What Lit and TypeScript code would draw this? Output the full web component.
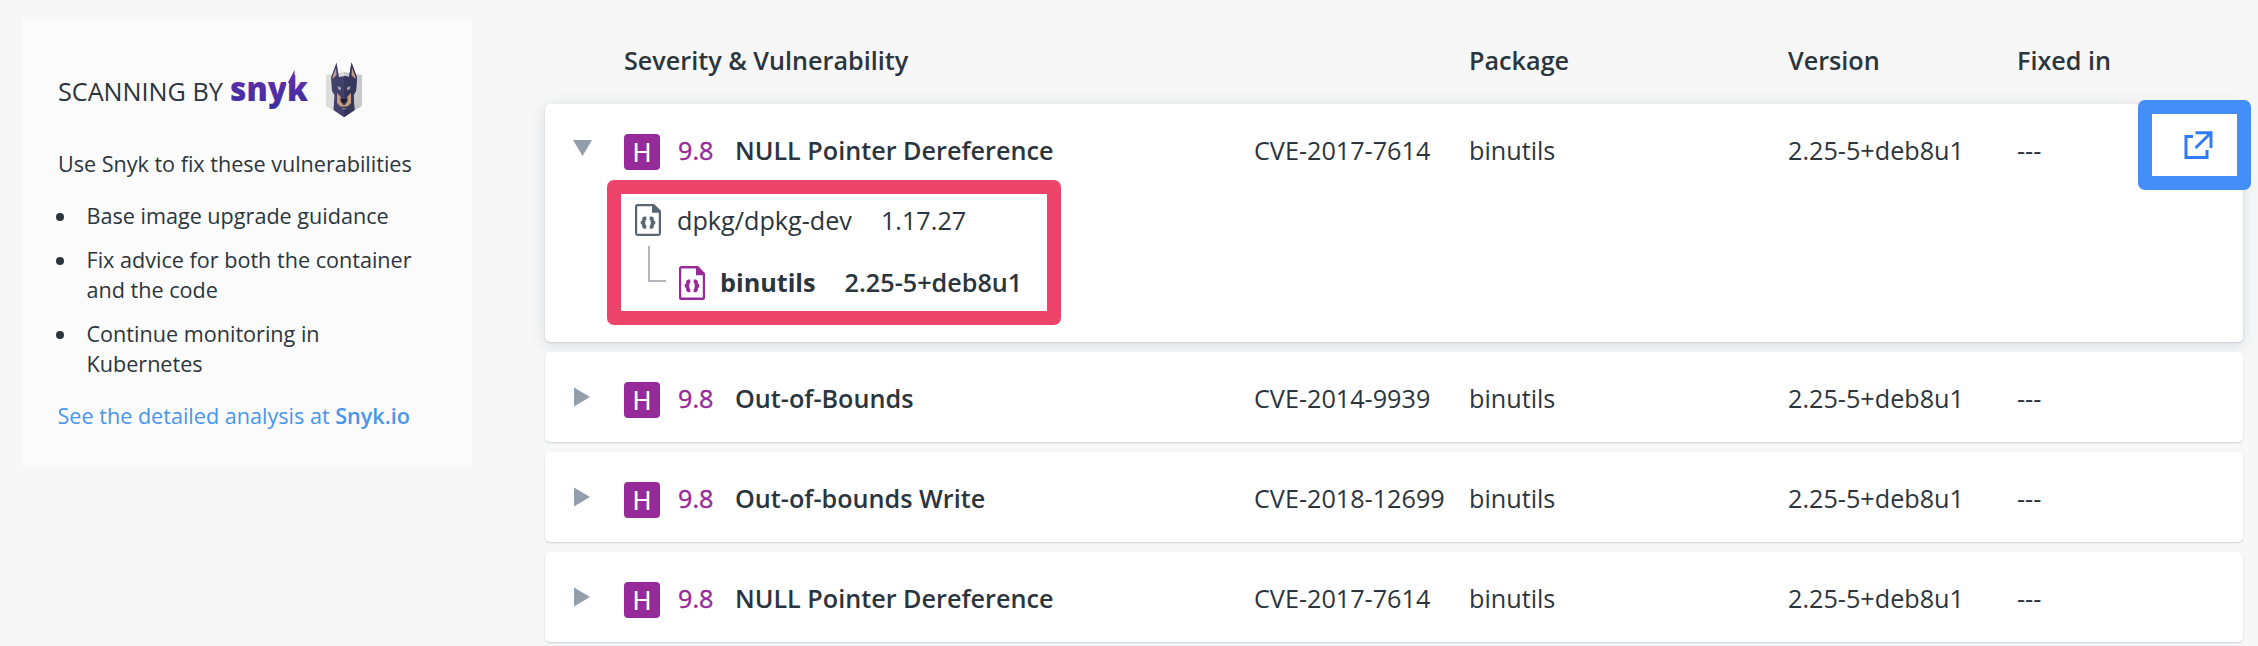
import { LitElement, html, svg, css, nothing } from "lit";
import { customElement, property } from "lit/decorators.js";

interface Vuln {
  name: string;
  cve: string;
  open?: boolean;
}

const VULNS: Vuln[] = [
  { name: "NULL Pointer Dereference", cve: "CVE-2017-7614", open: true },
  { name: "Out-of-Bounds", cve: "CVE-2014-9939" },
  { name: "Out-of-bounds Write", cve: "CVE-2018-12699" },
  { name: "NULL Pointer Dereference", cve: "CVE-2017-7614" },
];

// Document outline with a folded corner and a pair of braces inside.
const fileIcon = (h: number) => html`
  <svg class="file" width="26" height=${h} viewBox="0 0 26 33" preserveAspectRatio="none">
    <path d="M2.5 0H19L26 7V30.5Q26 33 23.5 33H2.5Q0 33 0 30.5V2.5Q0 0 2.500 0ZM2.200 2.400V30.600H23.800V9H17V2.400Z" fill="currentColor" fill-rule="evenodd"/>
    <path d="M11.300 14.700H9.800Q8.800 14.700 8.800 16V17.600Q8.800 19.200 5.800 19.200Q8.800 19.200 8.800 20.800V22.400Q8.800 23.700 9.800 23.700H11.300M14.700 14.700H16.200Q17.200 14.700 17.200 16V17.600Q17.200 19.200 20.200 19.200Q17.200 19.200 17.200 20.800V22.400Q17.200 23.700 16.200 23.700H14.700" fill="none" stroke="currentColor" stroke-width="3.4"/>
  </svg>`;

@customElement("snyk-panel")
class SnykPanel extends LitElement {
  static styles = css`
    :host { display: block; box-sizing: border-box; width: 450px; height: 448px; background: #fbfbfb; padding: 42px 36px 0; color: #2b353d; font-size: 21.6px; line-height: 30px; }
    .title { display: flex; height: 60px; align-items: flex-start; font-size: 25.2px; line-height: 62px; white-space: nowrap; }
    .word { margin-left: 7px; display: block; overflow: visible; }
    .dog { margin-left: 17px; display: block; }
    .logo-text { font: 800 34px "Open Sans", sans-serif; }
    p { margin: 0; white-space: nowrap; }
    .intro { margin-top: 29px; letter-spacing: -0.02px; }
    ul { list-style: none; margin: 22px 0 22px; padding: 0; display: grid; gap: 14px; }
    li { display: grid; grid-template-columns: 28.5px 1fr; }
    .dot { width: 8px; height: 8px; border-radius: 50%; background: #2b353d; margin: 12px 0 0 -2px; }
    .link { color: #4896ec; margin-left: -0.5px; }
    b { font-weight: 600; }
  `;
  render() {
    return html`
      <div class="title">
        <span>SCANNING BY</span>
        <svg class="word" width="79" height="60" viewBox="0 0 79 60">
          <defs>
            <linearGradient id="ink" gradientUnits="userSpaceOnUse" x1="0" y1="10" x2="0" y2="50">
              <stop offset="0" stop-color="#6a2ea8"/><stop offset="1" stop-color="#3730a0"/>
            </linearGradient>
          </defs>
          <text class="logo-text" fill="url(#ink)" x="0" y="41" textLength="78" lengthAdjust="spacingAndGlyphs">snyk</text>
          <path d="M56 12H64.500L57.300 24H56Z" fill="#fbfbfb"/>
          <path d="M57.800 23L64.600 10V23Z" fill="url(#ink)"/>
        </svg>
        <svg class="dog" width="36" height="58" viewBox="0 0 36 58">
          <path d="M0 15L18 12V57L0 46Z" fill="#dcdcdd"/>
          <path d="M18 12L36 15V46L18 57Z" fill="#c9c9ca"/>
          <path d="M10.500 2.500L13 17Q18 15.500 23 17L25.500 2.500L31 17.500L30 31L27.500 35L28.500 50L18 57.300L7.500 50L8.500 35L6 31L5 17.500Z" fill="#41406a"/>
          <path d="M18 16Q20.500 16 23 17L25.500 2.500L31 17.500L30 31L27.500 35L28.500 50L18 57.300Z" fill="#37365d"/>
          <path d="M10 8L10.500 15L6.500 19V17ZM26 8L25.500 15L29.500 19V17Z" fill="#c8a089"/>
          <path d="M11 33L14.500 36.500V41L17 45H19L21.500 41V36.500L25 33V43L21.500 46.500H14.500L11 43Z" fill="#c99d7c"/>
          <path d="M11.500 26L15 27.500V30L12.500 29.500ZM24.500 26L21 27.500V30L23.500 29.500Z" fill="#a9a3ae"/>
          <path d="M14.500 39H21.500L20 43H16Z" fill="#211f36"/>
          <path d="M15 48H21L18 49.500Z" fill="#8d8896"/>
        </svg>
      </div>
      <p class="intro">Use Snyk to fix these vulnerabilities</p>
      <ul>
        <li><span class="dot"></span><span>Base image upgrade guidance</span></li>
        <li><span class="dot"></span><span>Fix advice for both the container<br>and the code</span></li>
        <li><span class="dot"></span><span>Continue monitoring in<br>Kubernetes</span></li>
      </ul>
      <p class="link">See the detailed analysis at <b>Snyk.io</b></p>
    `;
  }
}

@customElement("vuln-row")
class VulnRow extends LitElement {
  @property({ attribute: false }) vuln!: Vuln;
  static styles = css`
    :host { display: block; }
    .card { position: relative; box-sizing: border-box; height: 90px; background: #fff; border-radius: 5px; box-shadow: 0 1px 2px #c9ced8; }
    .card.open { height: 238px; box-shadow: 0 1px 2px #c9ced8, 0 3px 16px rgba(70, 90, 120, 0.17); }
    .line { display: grid; grid-template-columns: 79px 54px 57px 519px 215px 319px 229px 1fr; padding-top: 29px; align-items: start; line-height: 34px; white-space: nowrap; }
    .arrow { display: block; margin-left: 28px; margin-top: 6px; color: #929eab; }
    .badge { width: 36px; height: 36px; margin-top: 1px; border-radius: 4px; background: #972a99; color: #fff; font: 26px/38px Roboto, sans-serif; text-align: center; }
    .score { color: #972a99; -webkit-text-stroke: 0.4px #972a99; }
    .name { font-weight: 600; }
    .tree { position: absolute; left: 62px; top: 76px; width: 454px; height: 145px; box-sizing: border-box; border: 14px solid #ec446b; border-radius: 7px; padding: 9px 0 0 14px; line-height: 34px; white-space: nowrap; }
    .node { display: flex; align-items: flex-start; }
    .node .pkg { margin-left: 16px; }
    .node .ver { margin-left: 29px; }
    .parent { height: 33px; }
    .parent .file { color: #5b6675; margin-top: 1px; }
    .child { margin-top: 10px; font-weight: 600; height: 54px; }
    .child .pkg { font-weight: 700; margin-left: 15px; }
    .child .file { color: #972a99; margin: 20px 0 0 13px; }
    .child span { margin-top: 19px; }
    .elbow { width: 18px; height: 36px; margin-left: 13px; box-sizing: border-box; border: solid #b3b7bb; border-width: 0 0 2px 2px; }
    .action { position: absolute; left: 1593px; top: -4px; width: 113px; height: 90px; box-sizing: border-box; border: 14px solid #448ff7; border-radius: 7px; padding: 17px 0 0 32px; background: #fff; }
    .action svg { display: block; }
  `;
  render() {
    const v = this.vuln;
    return html`
      <div class="card ${v.open ? "open" : ""}">
        <div class="line">
          <svg class="arrow" width="20" height="20" viewBox="0 0 20 20">
            ${v.open ? svg`<path d="M0 1H19L9.500 17Z" fill="currentColor"/>` : svg`<path d="M1 0.500V19.500L17 10Z" fill="currentColor"/>`}
          </svg>
          <span class="badge">H</span>
          <span class="score">9.8</span>
          <span class="name">${v.name}</span>
          <span>${v.cve}</span>
          <span>binutils</span>
          <span>2.25-5+deb8u1</span>
          <span>---</span>
        </div>
        ${v.open ? html`
          <div class="tree">
            <div class="node parent">${fileIcon(32)}<span class="pkg">dpkg/dpkg-dev</span><span class="ver">1.17.27</span></div>
            <div class="node child"><i class="elbow"></i>${fileIcon(34)}<span class="pkg">binutils</span><span class="ver">2.25-5+deb8u1</span></div>
          </div>
          <div class="action">
            <svg width="29" height="29" viewBox="0 0 29 29" fill="none" stroke="#2f7cf6" stroke-width="3">
              <path d="M9 5.500H2V26.500H23V19M11.500 1.700H27V17M27 1.700L11.500 17"/>
            </svg>
          </div>` : nothing}
      </div>`;
  }
}

@customElement("app-root")
class AppRoot extends LitElement {
  static styles = css`
    :host { display: flex; box-sizing: border-box; width: 2258px; height: 646px; overflow: hidden; background: #f7f7f7; padding: 18px 0 0 22px; color: #2b353d; font: 25.2px "Open Sans", sans-serif; }
    main { margin-left: 73px; width: 1698px; }
    header { display: grid; grid-template-columns: 79px 845px 319px 229px 1fr; height: 86px; box-sizing: border-box; padding-top: 25px; line-height: 34px; font-weight: 600; white-space: nowrap; }
    .rows { display: grid; gap: 10px; }
  `;
  render() {
    return html`
      <snyk-panel></snyk-panel>
      <main>
        <header><span></span><span>Severity &amp; Vulnerability</span><span>Package</span><span>Version</span><span>Fixed in</span></header>
        <div class="rows">${VULNS.map((v) => html`<vuln-row .vuln=${v}></vuln-row>`)}</div>
      </main>
    `;
  }
}
